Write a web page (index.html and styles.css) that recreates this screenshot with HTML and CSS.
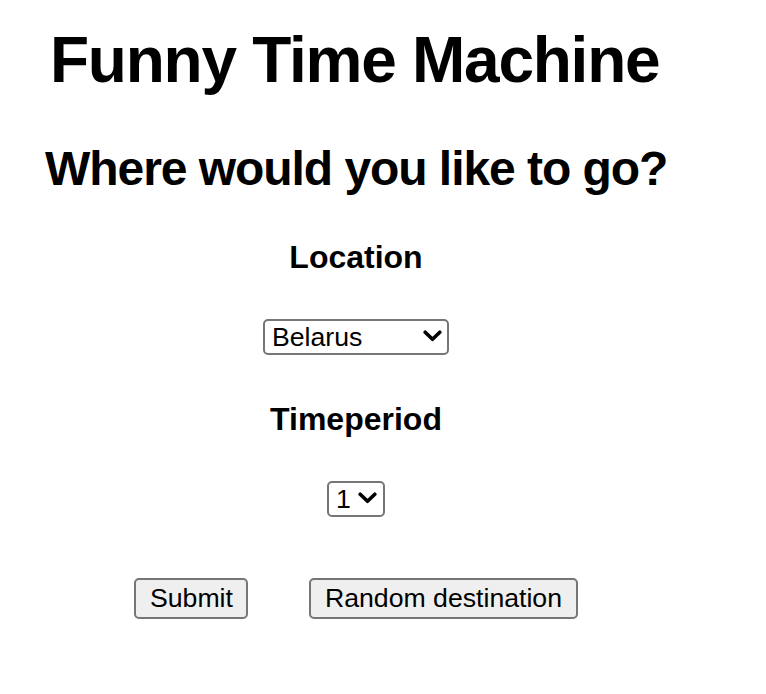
FILE: index.html
```html
<!DOCTYPE html>
<html lang="en">
<head>
<meta charset="utf-8">
<title>Funny Time Machine</title>
<link rel="stylesheet" href="styles.css">
</head>
<body>
<main class="page">
  <h1 class="title">Funny Time Machine</h1>
  <h2 class="subtitle">Where would you like to go?</h2>
  <form class="form">
    <label class="field-label" for="location">Location</label>
    <div class="select-wrap select-wide">
      <select id="location" class="select">
        <option>Belarus</option>
        <option>France</option>
        <option>Japan</option>
      </select>
      <svg class="chevron" viewBox="0 0 19 12" aria-hidden="true"><polyline points="2.2,2.2 9.5,9.3 16.8,2.2" fill="none" stroke="#000" stroke-width="3.6" stroke-linecap="round" stroke-linejoin="round"/></svg>
    </div>
    <label class="field-label field-label-second" for="period">Timeperiod</label>
    <div class="select-wrap select-narrow">
      <select id="period" class="select">
        <option>1</option>
        <option>2</option>
        <option>3</option>
      </select>
      <svg class="chevron" viewBox="0 0 19 12" aria-hidden="true"><polyline points="2.2,2.2 9.5,9.3 16.8,2.2" fill="none" stroke="#000" stroke-width="3.6" stroke-linecap="round" stroke-linejoin="round"/></svg>
    </div>
    <div class="actions">
      <button type="submit" class="btn">Submit</button>
      <button type="button" class="btn">Random destination</button>
    </div>
  </form>
</main>
</body>
</html>
```
FILE: styles.css
```css
html, body {
  margin: 0;
  padding: 0;
  background: #fff;
}

body {
  font-family: "Liberation Sans", Arial, Helvetica, sans-serif;
  color: #000;
}

.page {
  padding-top: 24px;
}

.title {
  margin: 0;
  padding-left: 50px;
  font-size: 64px;
  line-height: 72px;
  font-weight: 700;
  letter-spacing: -1.25px;
}

.subtitle {
  margin: 45px 0 0;
  padding-left: 45px;
  font-size: 48px;
  line-height: 56px;
  font-weight: 700;
  letter-spacing: -1.05px;
}

.form {
  width: 712px;
  display: flex;
  flex-direction: column;
  align-items: center;
  margin-top: 42px;
}

.field-label {
  font-size: 32px;
  line-height: 36px;
  font-weight: 700;
}

.field-label-second {
  margin-top: 46px;
}

.select-wrap {
  position: relative;
  margin-top: 44px;
  height: 36px;
}

.select-wide {
  width: 186px;
}

.select-narrow {
  width: 58px;
}

.select {
  appearance: none;
  -webkit-appearance: none;
  box-sizing: border-box;
  width: 100%;
  height: 36px;
  margin: 0;
  padding: 0 0 0 7px;
  border: 2px solid #767676;
  border-radius: 5px;
  background: #fff;
  color: #000;
  font-family: "Liberation Sans", Arial, sans-serif;
  font-size: 26.67px;
  outline: none;
}

.chevron {
  position: absolute;
  right: 7px;
  top: 11px;
  width: 19px;
  height: 12px;
  pointer-events: none;
}

.select-narrow .chevron {
  right: 8px;
}

.actions {
  display: flex;
  gap: 61px;
  margin-top: 61px;
}

.btn {
  box-sizing: border-box;
  height: 41px;
  margin: 0;
  padding: 0 13.5px;
  border: 2px solid #767676;
  border-radius: 5px;
  background: #efefef;
  color: #000;
  font-family: "Liberation Sans", Arial, sans-serif;
  font-size: 26.67px;
}
```
